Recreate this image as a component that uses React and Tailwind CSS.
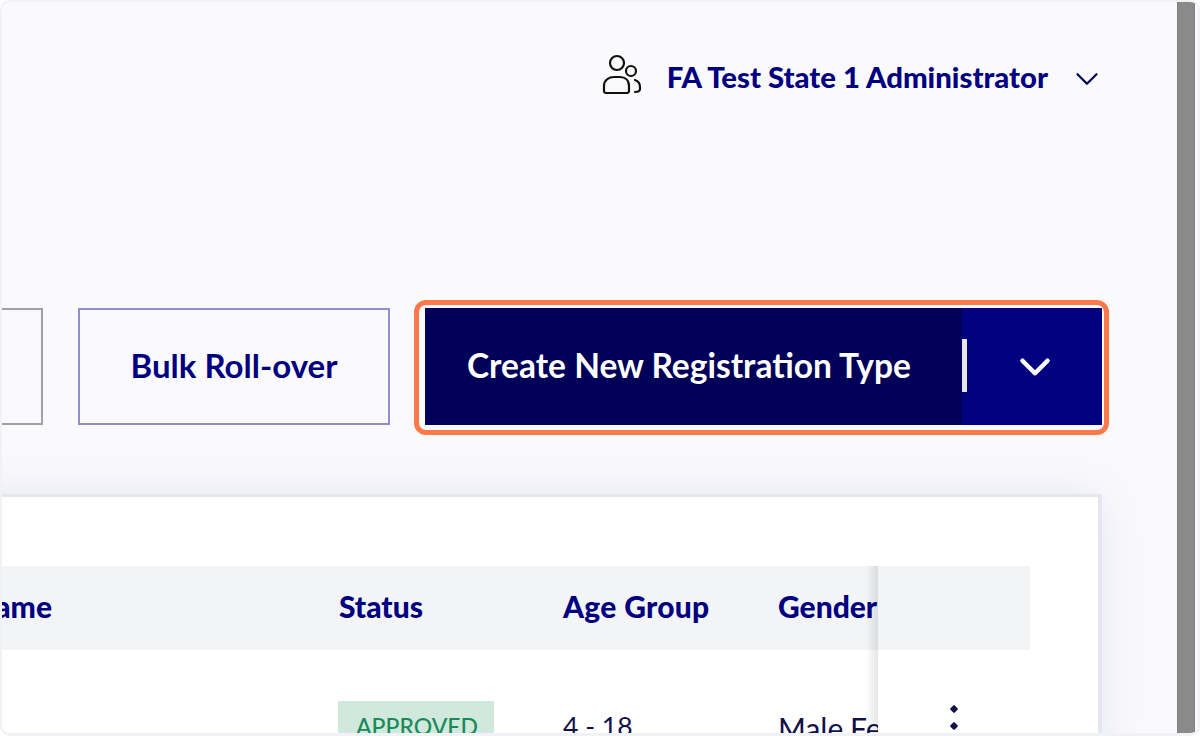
import { ChevronDown } from "lucide-react"

const UserGroupIcon = () => (
  <svg width="40" height="42" viewBox="0 0 40 42" fill="none" stroke="#111" strokeWidth="2.2" strokeLinecap="round" strokeLinejoin="round">
    <circle cx="15" cy="9" r="7" />
    <circle cx="29" cy="17" r="5" />
    <path d="M2 37 V32 C2 26 7 23 12 23 H18 C23 23 27 26 27 32 V37 C27 39 26 39 24 39 H5 C3 39 2 39 2 37 Z" />
    <path d="M33 26 C36 27 38 30 38 33 V35 C38 37 36 38 33 38" />
  </svg>
)

const Dot = () => <span className="h-[6px] w-[6px] rotate-45 rounded-[1px] bg-[#10104a]" />

const App = () => {
  return (
    <div className="h-screen w-full overflow-hidden bg-white font-['Lato',sans-serif]">
      <div className="flex h-[736px] rounded-[10px] border-x-2 border-t-2 border-b-[3px] border-[#f1f2f6] bg-[#fafafd] overflow-hidden">
        <main className="flex min-w-0 flex-1 flex-col overflow-hidden">
          {/* Top bar */}
          <header className="flex h-[306px] shrink-0 items-start justify-end pr-[71px] pt-[52px]">
            <UserGroupIcon />
            <span className="ml-[25px] mt-[6px] whitespace-nowrap text-[29.3px] leading-[34px] font-black text-[#000080]">
              FA Test State 1 Administrator
            </span>
            <ChevronDown className="ml-[20px] mt-[6px] h-[38px] w-[38px] text-[#000058]" strokeWidth={1.4} />
          </header>

          {/* Actions */}
          <div className="flex h-[117px] shrink-0 justify-end gap-[35px] pr-[75px]">
            <button className="w-[300px] shrink-0 border-2 border-[#a0a0a6]" />
            <button className="w-[312px] shrink-0 border-2 border-[#8f8fcf] pb-[2px] text-[33px] font-bold text-[#000080]">
              Bulk Roll-over
            </button>
            <div className="relative flex w-[677px] shrink-0">
              <button className="flex w-[537px] items-center pb-[2px] pl-[42px] text-[33.5px] font-bold whitespace-nowrap bg-[#000058] text-white">
                Create New Registration Type
              </button>
              <button className="relative flex flex-1 items-center justify-center bg-[#000080] text-white">
                <span className="absolute left-0 top-[31px] h-[53px] w-[5px] bg-[#e4e4ea]" />
                <ChevronDown className="ml-[5px] h-[50px] w-[50px]" strokeWidth={2.2} />
              </button>
              <div className="absolute -left-[11px] -right-[7px] -top-[8px] -bottom-[10px] rounded-[12px] border-[5px] border-[#ff7849]" />
            </div>
          </div>

          {/* Table card */}
          <section className="relative mr-[75px] mt-[69px] ml-[-300px] flex-1 border-t-[3px] border-r-[4px] border-[#e6e6ee] bg-white shadow-[0_0_45px_rgba(80,80,170,0.12)]">
            <div className="mt-[69px] mr-[68px] flex h-[84px] items-center justify-end bg-[#f3f4f6] pb-[4px] text-[30px] font-black text-[#000080]">
              <span className="whitespace-nowrap pr-[287px]">Type Name</span>
              <span className="w-[224px] shrink-0">Status</span>
              <span className="w-[215px] shrink-0 tracking-[0.3px]">Age Group</span>
              <span className="w-[252px] shrink-0">Gender</span>
            </div>
            <div className="mt-[51px] mr-[68px] flex justify-end text-[#10104a]">
              <span className="w-[225px] shrink-0">
                <span className="flex h-[60px] w-[156px] items-start justify-center bg-[#d1e9dc] pl-[2px] pt-[8px] text-[23px] font-medium text-[#1a8a5a]">
                  APPROVED
                </span>
              </span>
              <span className="w-[215px] shrink-0 pt-[6px] text-[26.5px]">4 - 18</span>
              <span className="w-[252px] shrink-0 whitespace-nowrap pt-[6px] text-[30px] leading-[42px]">Male,Female</span>
            </div>

            {/* Sticky actions column */}
            <div className="absolute bottom-0 right-0 top-[69px] w-[220px] bg-white">
              <div className="absolute bottom-0 right-full top-0 w-[12px] bg-gradient-to-l from-black/10 to-transparent" />
              <div className="mr-[68px] h-[84px] bg-[#f3f4f6]" />
              <div className="ml-[73px] mt-[56px] flex flex-col gap-[11px]">
                <Dot />
                <Dot />
                <Dot />
              </div>
            </div>
          </section>
        </main>

        {/* Scrollbar */}
        <div className="mr-[3px] w-[18px] shrink-0 border-x border-[#808080] bg-[#8a8a8a]" />
      </div>
    </div>
  )
}

export default App
